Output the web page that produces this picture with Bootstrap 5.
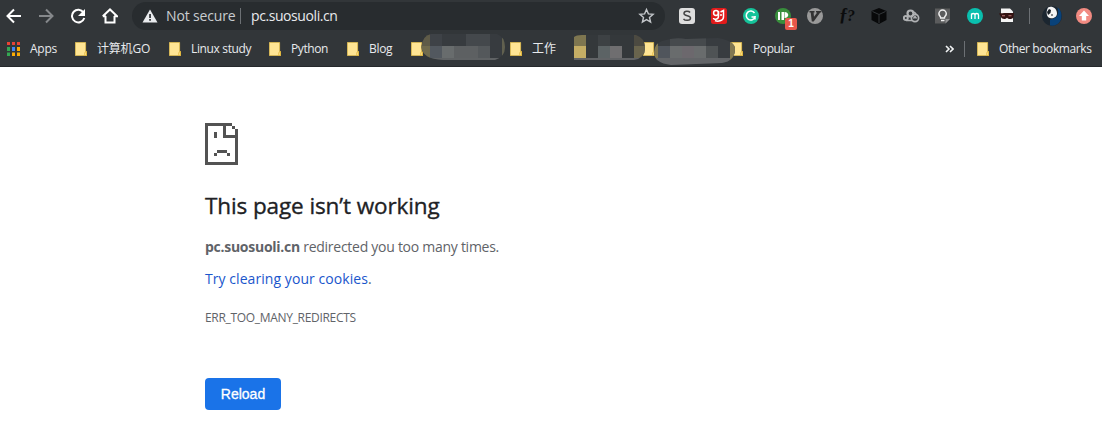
<!DOCTYPE html>
<html lang="en">
<head>
<meta charset="utf-8">
<meta name="viewport" content="width=device-width, initial-scale=1">
<title>pc.suosuoli.cn</title>
<link href="https://cdn.jsdelivr.net/npm/bootstrap@5.3.0/dist/css/bootstrap.min.css" rel="stylesheet">
<style>
body{font-family:"Open Sans","Noto Sans CJK SC",sans-serif;background:#fff;overflow:hidden}
svg{display:block;flex:none}
.chrome{height:67px;background:#323639;border-bottom:1px solid #25282b;color:#e8eaed}
.toolbar{height:32px}
.nav-icons{width:132px;padding-left:6px;gap:16px}
.omnibox{width:533px;height:28px;margin-top:2px;border-radius:14px;background:#282c2f;padding-left:10px;font-size:14px;line-height:28px;white-space:nowrap}
.omnibox .state{width:70px;margin-left:8px;letter-spacing:-.15px;color:#c9ccd0}
.omnibox .rule,.vrule{width:1px;height:16px;background:#6c7074}
.omnibox .addr{margin-left:10px;letter-spacing:-.42px}
.exts{margin-left:14px}
.exts>div{width:32px;height:32px;flex:none}
.profile{margin-left:-2px}
.avatar{margin-left:11px}
.update{margin-left:13px}
.ver{left:10px;top:18px;width:12px;height:12px;background:#e9574b;border-radius:2px;font:700 10px/12px "Liberation Sans",sans-serif;color:#fff;text-align:center}
.marks{height:33px;padding-left:7px;gap:18px;font-size:12px;white-space:nowrap}
.mark-item{gap:10px;flex:none}
.mark-item span{display:block;line-height:16px;position:relative}
.w-apps{width:27px;letter-spacing:-.25px}
.w-go{width:54px;letter-spacing:-.2px}
.w-linux{width:60px;letter-spacing:-.35px}
.w-python{width:38px;letter-spacing:-.4px}
.w-blog{width:24px;letter-spacing:-.3px}
.w-hidden1{width:59px}
.w-work{width:24px}
.w-hidden2{width:29px}
.w-hidden3{width:48px}
.w-popular{letter-spacing:-.4px}
.w-other{margin-left:10px;width:103px;letter-spacing:-.4px}
.marks .vrule{margin:0 12px 0 10px}
.strokes{left:421px;top:33px}
.page{padding:56px 0 0 205px;color:#5f6368}
.page h1{font-size:22.5px;line-height:28px;font-weight:500;color:#202124;margin:27px 0 0;letter-spacing:-.1px;white-space:nowrap;-webkit-text-stroke:.35px #202124}
.page p{margin:0;font-size:14px;line-height:20px;white-space:nowrap}
.page .reason{margin-top:17px;letter-spacing:-.27px}
.page .advice{margin-top:12px;letter-spacing:.06px}
.page .code{margin-top:19px;font-size:12px;letter-spacing:-.31px}
.page a{color:#1a56cc}
.reload{margin-top:50px;width:76px;height:32px;background:#1a73e8;color:#fff;border-radius:4px;font:14px/16px "Liberation Sans",sans-serif;-webkit-text-stroke:.3px #fff;padding:0}
.reload:hover{background:#1a73e8;color:#fff}
</style>
</head>
<body>
<svg width="0" height="0" class="position-absolute">
<defs>
<symbol id="folder" viewBox="0 0 12 14"><path fill="#ffe594" stroke="#e8c34f" stroke-width=".8" d="M.4.4h10.200v9.200h1v4H.4z"/><path fill="#ffe594" stroke="#dcae2b" stroke-width=".7" d="M9.800 13.500V10.500l1.700-1v4z"/></symbol>
</defs>
</svg>
<header class="chrome position-relative">
<div class="toolbar d-flex">
<div class="nav-icons d-flex align-items-center">
<svg width="16" height="16" fill="none" stroke="#fff" stroke-width="2"><path d="M15 8H2M8 1.500 1.500 8 8 14.500"/></svg>
<svg width="16" height="16" fill="none" stroke="#85888b" stroke-width="2"><path d="M1 8h13M8 1.500 14.500 8 8 14.500"/></svg>
<svg width="16" height="16" fill="none" stroke="#fff" stroke-width="2"><path d="M13.500 4.500A6.300 6.300 0 1 0 14.300 10"/><path fill="#fff" stroke="none" d="M15 1v7H8z"/></svg>
<svg width="16" height="16" fill="none" stroke="#fff" stroke-width="2"><path d="M3.500 8v6.500h9V8M.8 8.300 8 1.500l7.200 6.800h-3M.8 8.300h3"/></svg>
</div>
<div class="omnibox d-flex align-items-center">
<svg width="16" height="14"><path fill="#e8eaed" d="M8 .5 15.500 13.500H.5z"/><path fill="#282c2f" d="M7.200 5h1.700v4H7.200zm0 5h1.700v1.700H7.200z"/></svg>
<span class="state">Not secure</span><span class="rule ms-1"></span><span class="addr">pc.suosuoli.cn</span>
<svg class="ms-auto me-2" width="20" height="20" viewBox="0 0 20 20" fill="none" stroke="#c3c6ca" stroke-width="1.400"><path d="m9.500 3.500 1.900 4.400 4.700.4-3.600 3.100 1.100 4.700-4.100-2.500-4.100 2.500 1.100-4.700-3.600-3.100 4.700-.4z"/></svg>
</div>
<div class="exts d-flex">
<div><svg width="32" height="32"><rect x="0" y="8" width="16" height="16" rx="3" fill="#dedede"/><path d="M11 12.500C10 11 5 10.600 5 13.500c0 3 6.500 1.500 6.500 4.500 0 3-5.500 3-7 .8" fill="none" stroke="#444" stroke-width="1.500"/></svg></div>
<div><svg width="32" height="32"><rect y="8" width="16" height="16" rx="2.500" fill="#e21b1b"/><g fill="none" stroke="#fff" stroke-width="1.500"><circle cx="5" cy="13" r="2.400"/><path d="M7.500 11v5c0 4-5 4-5 2M9.500 12l3-1.500v6.500c0 4-6 5-8.500 3.500M9 15h2"/></g></svg></div>
<div><svg width="32" height="32"><circle cx="8" cy="16" r="8" fill="#15c39a"/><path d="M11.500 13A4.500 4.500 0 1 0 12 17H8.500M12 16v3.500" fill="none" stroke="#fff" stroke-width="1.500"/></svg></div>
<div class="position-relative"><svg width="32" height="32"><circle cx="8" cy="16" r="8" fill="#388e3c"/><path d="M3 12h2v8H3zm3.500 0H9v8H6.500zM9.500 12c5 0 5 6 0 6z" fill="#fff"/></svg><span class="ver position-absolute">1</span></div>
<div><svg width="32" height="32"><circle cx="8" cy="16" r="8" fill="#999"/><path d="M2.500 11h5v1.600h-.9l.4 4.200 3.200-4.200H9V11h5.200v1.600h-1L6.700 21.500H4.800L3.700 12.600H2.500z" fill="#333"/></svg></div>
<div><svg width="32" height="32"><text x="0" y="21" font-family="Liberation Serif,serif" font-style="italic" font-weight="700" font-size="18" fill="#0b0c0d">ƒ</text><text x="8" y="21" font-family="Liberation Serif,serif" font-style="italic" font-weight="700" font-size="16" fill="#0b0c0d">?</text></svg></div>
<div><svg width="32" height="32"><path fill="#08090a" d="m8 8 7.500 3v9L8 24 .5 20v-9z"/><path d="m1.500 11.500 6.500 3 6.500-3M8 14.500V23" stroke="#34383b" fill="none"/></svg></div>
<div><svg width="32" height="32" fill="none" stroke="#b0b2b4"><circle cx="7.500" cy="13.500" r="3" stroke-width="2.200"/><circle cx="2.800" cy="18" r="2" stroke-width="2"/><circle cx="12" cy="18" r="3.600" stroke-width="1.700"/><path d="M3 20.500h6M9 12c3 0 4 1.500 4 3M10.500 18.500l1.500-2 1.500 2" stroke-width="1.400"/></svg></div>
<div><svg width="32" height="32"><path fill="#5b5c5d" d="M0 8.500h15V19l-4.500 4.500H0z"/><path fill="#939495" d="M15 19h-4.500v4.500z"/><path d="M5.700 18c0-2-1.800-2-1.800-4.200a3.700 3.700 0 0 1 7.400 0c0 2.200-1.900 2.200-1.900 4.200zM6 20.500h3.500" fill="none" stroke="#eee" stroke-width="1.500"/></svg></div>
<div><svg width="32" height="32"><circle cx="8" cy="16" r="8" fill="#0abfae"/><path d="M4.500 19v-5.500M4.500 15c0-2 3.500-2 3.500 0v4M8 15c0-2 3.500-2 3.500 0v4" stroke="#fff" stroke-width="1.300" fill="none"/></svg></div>
<div><svg width="32" height="32"><path fill="#f4f4f4" d="M2 8.500h9l3 3V22H2z"/><path fill="#331312" d="M0 13.500c4-1 10-.5 15-.5l-.5 4.500c-2 2-5 2-6.500.2-1.500 1.800-5 1.800-6-.7z"/><path fill="#b77" d="M3 15.300h3v1H3zm6.500 0h3v1h-3z"/></svg></div>
</div>
<div class="profile d-flex align-items-center"><span class="vrule"></span>
<svg class="avatar" width="22" height="32"><circle cx="11" cy="16" r="10" fill="#1b2630"/><path fill="#09427a" d="M9 25.500c8 1 11.500-4 11.500-10 0-4-2-6.500-4-8 2 8-1 11-7.500 12z"/><path fill="#f5f5f5" d="M7 7.500c4-2 9 1 9 6 0 4-4.500 5.500-7 4.500-4-1-4-7-2-10.500z"/><path fill="#182027" d="M8 9l2 1-.5 3L7 15l-1-3zM10 14.500h2v1h-2z"/></svg>
<svg class="update" width="16" height="32"><circle cx="8" cy="16" r="8" fill="#f28b82"/><path fill="#fff" d="m8 10.500 5 5.500h-2.800v4.500H5.800V16H3z"/></svg></div>
</div>
<nav class="marks d-flex align-items-center">
<div class="mark-item d-flex align-items-center"><svg width="13" height="14"><path fill="#ea4335" d="M0 0h3v3H0zM5 0h3v3H5zM10 0h3v3h-3z"/><path fill="#34a853" d="M0 5h3v4H0zM0 10.500h3V14H0z"/><path fill="#4285f4" d="M5 5h3v4H5z"/><path fill="#fbab05" d="M10 5h3v4h-3zM5 10.500h3V14H5zM10 10.500h3V14h-3z"/></svg><span class="w-apps">Apps</span></div>
<div class="mark-item d-flex align-items-center"><svg width="12" height="14"><use href="#folder"/></svg><span class="w-go">计算机GO</span></div>
<div class="mark-item d-flex align-items-center"><svg width="12" height="14"><use href="#folder"/></svg><span class="w-linux">Linux study</span></div>
<div class="mark-item d-flex align-items-center"><svg width="12" height="14"><use href="#folder"/></svg><span class="w-python">Python</span></div>
<div class="mark-item d-flex align-items-center"><svg width="12" height="14"><use href="#folder"/></svg><span class="w-blog">Blog</span></div>
<div class="mark-item d-flex align-items-center"><svg width="12" height="14"><use href="#folder"/></svg><span class="w-hidden1"></span></div>
<div class="mark-item d-flex align-items-center"><svg width="12" height="14"><use href="#folder"/></svg><span class="w-work">工作</span></div>
<div class="mark-item d-flex align-items-center"><svg width="12" height="14"><use href="#folder"/></svg><span class="w-hidden2"></span></div>
<div class="mark-item d-flex align-items-center"><svg width="12" height="14"><use href="#folder"/></svg><span class="w-hidden3"></span></div>
<div class="mark-item d-flex align-items-center"><svg width="12" height="14"><use href="#folder"/></svg><span class="w-popular">Popular</span></div>
<div class="d-flex align-items-center ms-auto">
<svg width="9" height="8" fill="none" stroke="#f1f3f4" stroke-width="1.600"><path d="m1 1 3 3-3 3m4-6 3 3-3 3"/></svg>
<span class="vrule"></span>
<svg width="12" height="14"><use href="#folder"/></svg><span class="w-other">Other bookmarks</span></div>
</nav>
<!-- pixelated strokes hiding three bookmark names -->
<svg class="strokes position-absolute" width="315" height="34" shape-rendering="crispEdges">
<defs><clipPath id="c1"><path d="M10 1h66q8 3 8 13t-10 13H22Q1 26 .5 14 1 3 10 1"/></clipPath><clipPath id="c2"><path d="M153 4q2-2 8-2h54q9 3 9 13t-11 12h-60z"/></clipPath><clipPath id="c3"><path d="M241 8q12-4 24-2l32-1q17 3 17 11 0 12-13 14l-51 2q-17-2-17-13 1-9 8-11"/></clipPath></defs>
<g clip-path="url(#c1)"><path fill="#373b3f" d="M0 0h85v28H0z"/><path fill="#5f5b48" d="M0 0h9v13H0z"/><path fill="#716b4e" d="M0 13h9v13H0z"/><path fill="#3e4247" d="M9 0h12v13H9z"/><path fill="#52585f" d="M9 13h12v12H9z"/><path fill="#686c6d" d="M21 13h12v12H21z"/><path fill="#5d6062" d="M33 13h12v12H33zM45 13h12v12H45z"/><path fill="#54585b" d="M57 13h12v12H57z"/><path fill="#44484c" d="M45 0h24v13H45z"/><path fill="#61604f" d="M81 0h4v28h-4z"/><path fill="#5f6264" d="M0 25h80v3H0z"/></g>
<g clip-path="url(#c2)"><path fill="#34383b" d="M153 0h72v28h-72z"/><path fill="#7e7650" d="M153 0h12v13h-12z"/><path fill="#c4ad65" d="M153 13h12v12h-12z"/><path fill="#3d4144" d="M177 0h12v13h-12z"/><path fill="#5c6365" d="M177 13h12v12h-12z"/><path fill="#6f6e70" d="M189 13h12v12h-12z"/><path fill="#4c4a41" d="M213 0h12v13h-12z"/><path fill="#69644d" d="M213 13h12v12h-12z"/><path fill="#616366" d="M153 25h72v3h-72z"/></g>
<g clip-path="url(#c3)"><path fill="#383c40" d="M232 0h83v34h-83z"/><path fill="#827851" d="M232 0h5v34h-5zM309 0h6v34h-6z"/><path fill="#50555c" d="M237 13h12v12h-12z"/><path fill="#464a4d" d="M249 0h36v13h-36z"/><path fill="#696c6d" d="M249 13h12v12h-12zM273 13h12v12h-12z"/><path fill="#6c686d" d="M261 13h12v12h-12z"/><path fill="#4f5355" d="M285 13h12v12h-12z"/><path fill="#636568" d="M232 25h77v9h-77z"/></g>
</svg>
</header>
<main class="page">
<svg width="33" height="42" fill="#535353" shape-rendering="crispEdges"><path d="M0 0h27v3H3v36h27V15H18V3h3v9h9V6h3v36H0zM27 3h3v3h-3zM9 9h3v6H9zM12 27h10v3H12zM9 30h3v3H9zM22 30h3v3h-3z"/></svg>
<h1>This page isn’t working</h1>
<p class="reason"><strong>pc.suosuoli.cn</strong> redirected you too many times.</p>
<p class="advice"><a class="text-decoration-none" href="#">Try clearing your cookies</a>.</p>
<p class="code">ERR_TOO_MANY_REDIRECTS</p>
<button class="btn reload">Reload</button>
</main>
</body>
</html>
